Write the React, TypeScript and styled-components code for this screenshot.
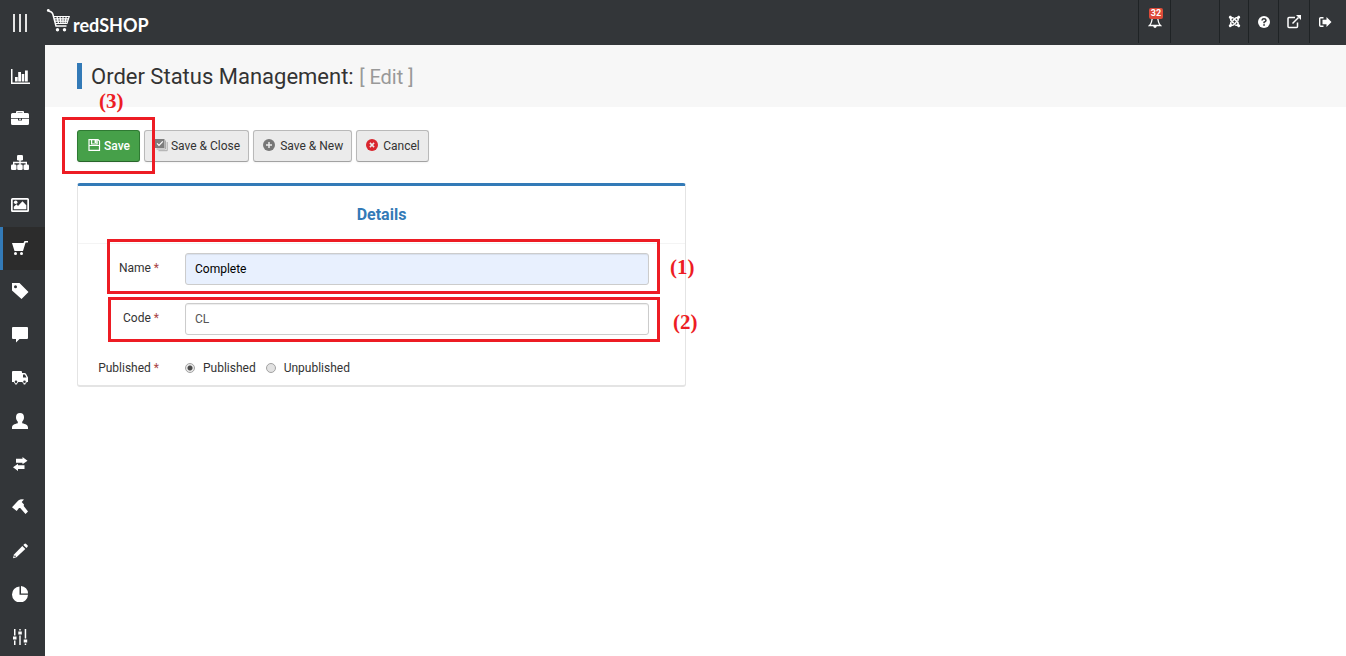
import React from 'react';
import styled, { createGlobalStyle } from 'styled-components';
import { FaJoomla } from 'react-icons/fa';

const GlobalStyle = createGlobalStyle`
  *, *::before, *::after { box-sizing: border-box; }
  body {
    margin: 0;
    background: #fff;
    color: #333;
    font-family: Roboto, "Liberation Sans", sans-serif;
    font-size: 12px;
    line-height: 18px;
  }
  button, input { font: inherit; }
`;

const Page = styled.div`
  display: flex;
  flex-direction: column;
  min-height: 100vh;
`;

const TopBar = styled.header`
  display: flex;
  justify-content: space-between;
  height: 45px;
  padding-right: 6px;
  background: #333639;
`;

const Brand = styled.div`
  display: flex;
  align-items: flex-start;
`;

const MenuButton = styled.button`
  width: 45px;
  height: 45px;
  padding: 0;
  border: 0;
  background: none;
  color: #fff;
  svg { display: block; margin-left: 10px; }
`;

const Logo = styled.a`
  display: flex;
  align-items: flex-start;
  gap: 3px;
  padding: 9px 0 0 1px;
  color: #fff;
  text-decoration: none;
`;

const LogoText = styled.span`
  padding-top: 4px;
  font-family: Lato, sans-serif;
  font-size: 18px;
  font-weight: 700;
  line-height: 24px;
`;

const Tools = styled.nav`
  display: flex;
  height: 43px;
`;

const Tool = styled.a<{ $width: number }>`
  position: relative;
  display: flex;
  align-items: center;
  justify-content: center;
  width: ${(p) => p.$width}px;
  border-left: 1px solid #1f2325;
  color: #fff;
`;

const Badge = styled.span`
  position: absolute;
  top: 8px;
  left: 10px;
  width: 14px;
  height: 11px;
  border-radius: 2px;
  background: #dd4b39;
  font-size: 9px;
  font-weight: 700;
  line-height: 11px;
  text-align: center;
`;

const Body = styled.div`
  display: flex;
  flex: 1;
`;

const Sidebar = styled.nav`
  flex: 0 0 45px;
  padding-top: 10px;
  background: #333639;
`;

const SideLink = styled.a<{ $active?: boolean }>`
  display: block;
  height: 43px;
  padding: 11px 0 0 7px;
  border-left: 3px solid ${(p) => (p.$active ? '#337ab7' : 'transparent')};
  background: ${(p) => (p.$active ? '#2c2c2c' : 'transparent')};
  color: #fff;
  svg { display: block; }
`;

const Main = styled.main`
  flex: 1;
  min-width: 0;
`;

const TitleBand = styled.div`
  padding: 18px 32px;
  background: #f7f7f7;
`;

const Title = styled.h1`
  margin: 0;
  padding: 2px 0 0 9px;
  border-left: 5px solid #337ab7;
  color: #333;
  font-size: 22px;
  font-weight: 400;
  line-height: 24px;
`;

const TitleMode = styled.small`
  color: #999;
  font-size: 20px;
`;

const Content = styled.div`
  padding: 23px 32px;
`;

const Toolbar = styled.div`
  display: flex;
  gap: 4px;
  margin-bottom: 21px;
`;

const Highlighted = styled.div`
  position: relative;
`;

const Button = styled.button<{ $primary?: boolean }>`
  display: flex;
  align-items: center;
  gap: 3px;
  height: 32px;
  padding: ${(p) => (p.$primary ? '0 9px' : '0 8px 0 9px')};
  border: 1px solid ${(p) => (p.$primary ? '#2f7a33' : '#b9b9b9')};
  border-bottom-color: ${(p) => (p.$primary ? '#28652b' : '#a2a2a2')};
  border-radius: 3px;
  background: ${(p) => (p.$primary ? '#46a049' : '#ebebeb')};
  box-shadow: 0 1px 2px rgba(0, 0, 0, 0.05);
  color: ${(p) => (p.$primary ? '#fff' : '#333')};
  font-weight: ${(p) => (p.$primary ? 500 : 400)};
  white-space: nowrap;
`;

const Columns = styled.div`
  display: grid;
  grid-template-columns: 1fr 1fr;
  gap: 19px;
`;

const Card = styled.section`
  border: 1px solid #e4e4e4;
  border-top: 3px solid #337ab7;
  border-bottom-width: 2px;
  border-radius: 3px;
`;

const CardTitle = styled.h2`
  margin: 0;
  padding: 18px 0 17px;
  border-bottom: 1px solid #f4f4f4;
  color: #337ab7;
  font-size: 16px;
  font-weight: 700;
  line-height: 22px;
  text-align: center;
`;

const Form = styled.form`
  display: flex;
  flex-direction: column;
  gap: 18px;
  padding: 9px 36px 0 0;
`;

const Field = styled.div`
  position: relative;
  display: grid;
  grid-template-columns: 81px 1fr;
  column-gap: 26px;
  height: 32px;
`;

const FieldLabel = styled.label`
  padding-top: 6px;
  text-align: right;
`;

const Required = styled.span`
  color: #a94442;
`;

const TextInput = styled.input<{ $filled?: boolean }>`
  width: 100%;
  height: 32px;
  padding: 0 9px;
  border: 1px solid #ccc;
  border-radius: 3px;
  background: ${(p) => (p.$filled ? '#e8f0fe' : '#fff')};
  box-shadow: inset 0 1px 1px rgba(0, 0, 0, 0.075);
  color: ${(p) => (p.$filled ? '#000' : '#555')};
  outline: 0;
`;

const RadioGroup = styled.div`
  display: flex;
  align-items: flex-start;
  gap: 10px;
  padding-top: 6px;
`;

const RadioLabel = styled.label`
  display: flex;
  align-items: center;
  gap: 8px;
`;

const Radio = styled.input`
  appearance: none;
  width: 10px;
  height: 10px;
  margin: 0;
  border: 1px solid #a3a3a3;
  border-radius: 50%;
  background: #e2e2e2;
  &:checked {
    background: radial-gradient(circle, #4a4a4a 2px, #e8e8e8 3px);
  }
`;

const Frame = styled.span<{ $top: number; $right: number; $bottom: number; $left: number }>`
  position: absolute;
  top: ${(p) => p.$top}px;
  right: ${(p) => p.$right}px;
  bottom: ${(p) => p.$bottom}px;
  left: ${(p) => p.$left}px;
  border: 3px solid #ed1c24;
  pointer-events: none;
  z-index: 1;
`;

const Step = styled.span<{ $top: number; $left: string }>`
  position: absolute;
  top: ${(p) => p.$top}px;
  left: ${(p) => p.$left};
  color: #ed1c24;
  font-family: "Liberation Serif", serif;
  font-size: 21px;
  font-weight: 700;
  line-height: 24px;
  z-index: 1;
`;

type IconProps = { size?: number; children: React.ReactNode };
const Icon = ({ size = 20, children }: IconProps) => (
  <svg width={size} height={size} viewBox={`0 0 ${size} ${size}`} fill="currentColor" aria-hidden="true">
    {children}
  </svg>
);

const sideItems: { label: string; active?: boolean; icon: React.ReactNode }[] = [
  { label: 'Dashboard', icon: <path d="M1 3h1.500v13.500h18V18H1zM5 11h2.700v4.500H5zM8.200 6H11v9.500H8.200zM11.700 8h2.600v7.500h-2.600zM15 4.500h2.800v11H15z" /> },
  { label: 'Products', icon: <path fillRule="evenodd" d="M6 4V3q0-1 1-1h6q1 0 1 1v1h3.500Q19 4 19 5.500V9H1V5.500Q1 4 2.500 4zM7.500 3.400V4h5v-.6zM1 9.700h7v1.800h4V9.700h7v4.800q0 1.500-1.500 1.500h-15Q1 16 1 14.500zM9 9.700h2v1H9z" /> },
  { label: 'Categories', icon: <><rect x="7" y="3" width="6" height="5.500" rx="1.300" /><rect x="1" y="12.500" width="5.500" height="5.500" rx="1.300" /><rect x="7.200" y="12.500" width="5.500" height="5.500" rx="1.300" /><rect x="13.500" y="12.500" width="5.500" height="5.500" rx="1.300" /><path d="M3.700 13v-2.500h12.600V13M10 8v5" fill="none" stroke="currentColor" strokeWidth="1.400" /></> },
  { label: 'Media', icon: <><path fillRule="evenodd" d="M2.500 3h15Q19 3 19 4.500v11q0 1.500-1.500 1.500h-15Q1 17 1 15.500v-11Q1 3 2.500 3zM2.700 4.700v10.600h14.600V4.700z" /><circle cx="5.700" cy="7.300" r="1.800" /><path d="M3.800 14.300v-2.500L6.500 9.300 8 11l4.500-4.700 3.800 4v4z" /></> },
  { label: 'Orders', active: true, icon: <><path d="M2 5h11.500l1-2H18v1.500h-2.400L13 13H4.500z" /><circle cx="5.500" cy="15.500" r="1.500" /><circle cx="11.500" cy="15.500" r="1.500" /></> },
  { label: 'Discounts', icon: <path fillRule="evenodd" d="M2 2h7.500l9 9-7 7L2 9.500zM5.500 4.200a1.500 1.500 0 1 0 0 3 1.500 1.500 0 0 0 0-3z" /> },
  { label: 'Communication', icon: <path d="M3 3h14q1 0 1 1v10q0 1-1 1H9.500L6 18.500V15H3q-1 0-1-1V4q0-1 1-1z" /> },
  { label: 'Shipping', icon: <path fillRule="evenodd" d="M3 4h8q1 0 1 1v1h2.500q1 0 1.500.8l2 3.700V15h-1.200a2.300 2.300 0 0 1-4.500 0H8.300a2.300 2.300 0 0 1-4.500 0H2V5q0-1 1-1zM13 7.500v3h3.500l-1.600-3zM6 13.400a1.300 1.300 0 1 0 0 2.600 1.300 1.300 0 0 0 0-2.600zM14.500 13.400a1.300 1.300 0 1 0 0 2.600 1.300 1.300 0 0 0 0-2.600zM4.500 16.700h3l-1 .8h-1zM13 16.700h3l-1 .8h-1z" /> },
  { label: 'Users', icon: <path d="M10 3c2.600 0 4 1.600 4 4.200 0 2-.7 3.400-1.800 4.500v1.500c3.500.8 5.800 1.800 5.800 4.300V19H2v-1.500c0-2.500 2.300-3.500 5.800-4.300v-1.500C6.700 10.600 6 9.200 6 7.200 6 4.600 7.400 3 10 3z" /> },
  { label: 'Import and export', icon: <path d="M6 5.800h6.500V4l5 3.700-5 3.600V9.800H6zM14.500 16H8v2l-5-3.700 5-3.600v1.500h6.500z" /> },
  { label: 'Customization', icon: <path d="m2 11.300 6.300-6.800Q11 2.500 14 3.500L11.700 6l2.300 2.500-.3 1.500 4.300 5.500-2.500 2.500-5.300-6L9 12l-2.300 3z" /> },
  { label: 'Customer input', icon: <><path d="m12.300 7 3 3-8.800 8.300L3 19.300l1-3.800z" /><path d="m13.300 6 1-1q1-.8 1.900 0L17.400 6.300q.8 1 0 1.800l-1 1z" /><circle cx="5" cy="17.300" r=".8" fill="#333639" /></> },
  { label: 'Statistics', icon: <path d="M9.500 4.500v8.300H18A8 8 0 1 1 9.500 4.500zM11 4a7.500 7.500 0 0 1 7 7.500h-7z" /> },
  { label: 'Configuration', icon: <path d="M4 4h1.500v6.500H4zM3 11.500h3.500v3H3zM4 15.500h1.500V20H4zM9.300 4h1.400v1.500H9.300zM8.300 6.500h3.500v3H8.300zM9.300 10.500h1.400V20H9.300zM14.700 4h1.500v9.500h-1.500zM13.700 14.500h3.500v3h-3.500zM14.700 18.500h1.500V20h-1.500z" /> },
];

export default function App() {
  return (
    <Page>
      <GlobalStyle />
      <TopBar>
        <Brand>
          <MenuButton type="button" aria-label="Toggle menu">
            <svg width="20" height="20" viewBox="0 0 20 20" fill="#e4e4e4" aria-hidden="true">
              <path d="M3 1h2v18H3zM9 1h2v18H9zM15 1h2v18h-2z" />
            </svg>
          </MenuButton>
          <Logo href="#" aria-label="redSHOP">
            <svg width="24" height="24" viewBox="0 0 24 24" fill="none" stroke="currentColor" aria-hidden="true">
              <circle cx="2.300" cy="1.500" r="1.400" fill="currentColor" stroke="none" />
              <path d="M3 2.200q3 .3 3.800 2.800l3.200 12h10.500" strokeWidth="1.500" />
              <path d="M7.500 7.500h15.700l-2.200 7H9.500M8 9.800h14.500M9 12.200h12.700M11 7.500l1.500 7M14 7.500l1 7M17 7.500v7M20.200 7.500l-1.200 7" strokeWidth="1.200" />
              <circle cx="11.500" cy="20.700" r="1.700" fill="currentColor" stroke="none" />
              <circle cx="18.500" cy="20.700" r="1.700" fill="currentColor" stroke="none" />
            </svg>
            <LogoText>redSHOP</LogoText>
          </Logo>
        </Brand>
        <Tools aria-label="Tools">
          <Tool href="#" $width={32} aria-label="Notifications">
            <Icon size={14}>
              <path d="M4.500 1Q4 8 1.500 10.500h11Q10 8 9.500 1" fill="none" stroke="currentColor" strokeWidth="1.300" />
              <path d="M5.200 11h3.600q-.4 2-1.800 2t-1.800-2z" />
            </Icon>
            <Badge>32</Badge>
          </Tool>
          <Tool as="span" $width={49} />
          <Tool href="#" $width={29} aria-label="Joomla"><FaJoomla size={13} aria-hidden="true" /></Tool>
          <Tool href="#" $width={30} aria-label="Help">
            <Icon size={14}>
              <circle cx="7" cy="7" r="6" />
              <path d="M5 5.500Q5.200 3.800 7 3.800t2 1.500Q9 6.500 7.100 7.300v1" fill="none" stroke="#333639" strokeWidth="1.600" />
              <path d="M6.200 9.200h1.700v1.600H6.200z" fill="#333639" />
            </Icon>
          </Tool>
          <Tool href="#" $width={31} aria-label="View site">
            <Icon size={14}>
              <path d="M8 2.500H2q-1 0-1 1V11.500q0 1 1 1h7.500q1 0 1-1V7.500M5.500 8.500 11.500 2.500" fill="none" stroke="currentColor" strokeWidth="1.500" />
              <path d="M9 0h5v5z" />
            </Icon>
          </Tool>
          <Tool href="#" $width={31} aria-label="Log out">
            <Icon size={14}>
              <path d="M5.500 2.700H2.700q-1 0-1 1v6.600q0 1 1 1h2.800" fill="none" stroke="currentColor" strokeWidth="1.400" />
              <path d="M4.500 4.800h4V2L13.500 7l-5 5V9.200h-4z" />
            </Icon>
          </Tool>
        </Tools>
      </TopBar>
      <Body>
        <Sidebar aria-label="Main menu">
          {sideItems.map((item) => (
            <SideLink key={item.label} href="#" aria-label={item.label} $active={item.active}>
              <Icon>{item.icon}</Icon>
            </SideLink>
          ))}
        </Sidebar>
        <Main>
          <TitleBand>
            <Title>Order Status Management: <TitleMode>[ Edit ]</TitleMode></Title>
          </TitleBand>
          <Content>
            <Toolbar>
              <Highlighted>
                <Button type="button" $primary>
                  <Icon size={14}>
                    <path d="M2 .6h9l1.500 1.500v9.300H2zM2 6.500h10.500M4.600 1v4h5.500V1" fill="none" stroke="currentColor" strokeWidth="1.200" />
                    <path d="M7.600 1h2v3h-2z" />
                  </Icon>
                  Save
                </Button>
                <Frame $top={-13} $right={-15} $bottom={-12} $left={-15} />
                <Step $top={-41} $left="22px">(3)</Step>
              </Highlighted>
              <Button type="button">
                <Icon size={14}>
                  <path d="M.5 0h10v9H.5z" fill="#7d7d7d" />
                  <path d="m3 4.300 2 2 3.800-4" fill="none" stroke="#fff" strokeWidth="1.200" />
                  <path d="M11.500 1.500V10H2.500M13.200 3v8.700H4.500" fill="none" stroke="#aaa" strokeWidth="1" />
                </Icon>
                Save &amp; Close
              </Button>
              <Button type="button">
                <Icon size={14}>
                  <circle cx="6" cy="6" r="6" fill="#777" />
                  <path d="M6 3v6M3 6h6" stroke="#ebebeb" strokeWidth="1.500" />
                </Icon>
                Save &amp; New
              </Button>
              <Button type="button">
                <Icon size={14}>
                  <circle cx="6" cy="6" r="6" fill="#d9262e" />
                  <path d="m3.900 3.900 4.200 4.200M8.100 3.900 3.900 8.100" stroke="#ebebeb" strokeWidth="1.500" />
                </Icon>
                Cancel
              </Button>
            </Toolbar>
            <Columns>
              <Card>
                <CardTitle>Details</CardTitle>
                <Form>
                  <Field>
                    <FieldLabel htmlFor="status-name">Name <Required>*</Required></FieldLabel>
                    <TextInput id="status-name" type="text" defaultValue="Complete" $filled />
                    <Frame $top={-14} $right={-11} $bottom={-9} $left={29} />
                    <Step $top={2} $left="calc(100% + 21px)">(1)</Step>
                  </Field>
                  <Field>
                    <FieldLabel htmlFor="status-code">Code <Required>*</Required></FieldLabel>
                    <TextInput id="status-code" type="text" defaultValue="CL" />
                    <Frame $top={-6} $right={-11} $bottom={-7} $left={30} />
                    <Step $top={7} $left="calc(100% + 24px)">(2)</Step>
                  </Field>
                  <Field role="radiogroup" aria-labelledby="status-published">
                    <FieldLabel as="span" id="status-published">Published <Required>*</Required></FieldLabel>
                    <RadioGroup>
                      <RadioLabel><Radio type="radio" name="published" defaultChecked />Published</RadioLabel>
                      <RadioLabel><Radio type="radio" name="published" />Unpublished</RadioLabel>
                    </RadioGroup>
                  </Field>
                </Form>
              </Card>
            </Columns>
          </Content>
        </Main>
      </Body>
    </Page>
  );
}
